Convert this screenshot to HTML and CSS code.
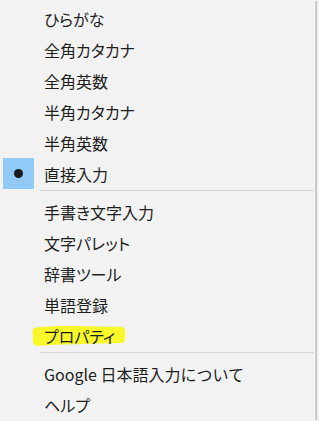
FILE: index.html
```html
<!DOCTYPE html>
<html lang="ja">
<head>
    <meta charset="UTF-8">
    <meta name="viewport" content="width=device-width, initial-scale=1.0">
    <title>IME メニュー</title>
    <link rel="stylesheet" href="styles.css">
</head>
<body>

    <div class="menu">
        <div class="item">ひらがな</div>
        <div class="item">全角カタカナ</div>
        <div class="item">全角英数</div>
        <div class="item">半角カタカナ</div>
        <div class="item">半角英数</div>
        <div class="item checked">
            <span class="check"><span class="dot"></span></span>直接入力
        </div>
        <div class="separator"></div>
        <div class="item">手書き文字入力</div>
        <div class="item">文字パレット</div>
        <div class="item">辞書ツール</div>
        <div class="item">単語登録</div>
        <div class="item marked">
            <svg class="marker" width="96" height="26" viewBox="0 0 96 26">
                <path d="M3 5 C20 2 50 3 92 4 C95 5 95 17 92 20 C60 21 30 21 6 23 C2 22 1 18 2 13 C1 10 1 7 3 5 Z" fill="#f7f72a"/>
            </svg>
            <span class="label">プロパティ</span>
        </div>
        <div class="separator"></div>
        <div class="item about">Google 日本語入力について</div>
        <div class="item">ヘルプ</div>
    </div>

</body>
</html>
```

FILE: styles.css
```css
/* メニューのスタイル */
body {
    margin: 0;
    background-color: #f2f2f2;
    font-family: "Noto Sans CJK JP", "Noto Sans", sans-serif;
}

.menu {
    width: 315px;
    height: 421px;
    box-sizing: border-box;
    padding-top: 3px;
    border-right: 1px solid #fbfbfb;
    box-shadow: 3px 0 0 -1px #c8c8c8;
    overflow: hidden;
}

.item {
    position: relative;
    height: 31px;
    display: flex;
    align-items: center;
    padding-left: 44px;
    font-size: 16px;
    font-feature-settings: "palt";
    color: #1e1e1e;
    white-space: nowrap;
}

.item.about {
    font-feature-settings: normal;
}

.check {
    position: absolute;
    left: 3px;
    top: 0;
    width: 31px;
    height: 31px;
    background-color: #91c9f7;
    display: flex;
    align-items: center;
    justify-content: center;
}

.dot {
    width: 9px;
    height: 9px;
    border-radius: 50%;
    background-color: #1a1a1a;
}

.separator {
    height: 1px;
    margin: 1px 0 5px 40px;
    background-color: #d6d6d6;
}

.marker {
    position: absolute;
    left: 31px;
    top: 3px;
}

.label {
    position: relative;
}
```
